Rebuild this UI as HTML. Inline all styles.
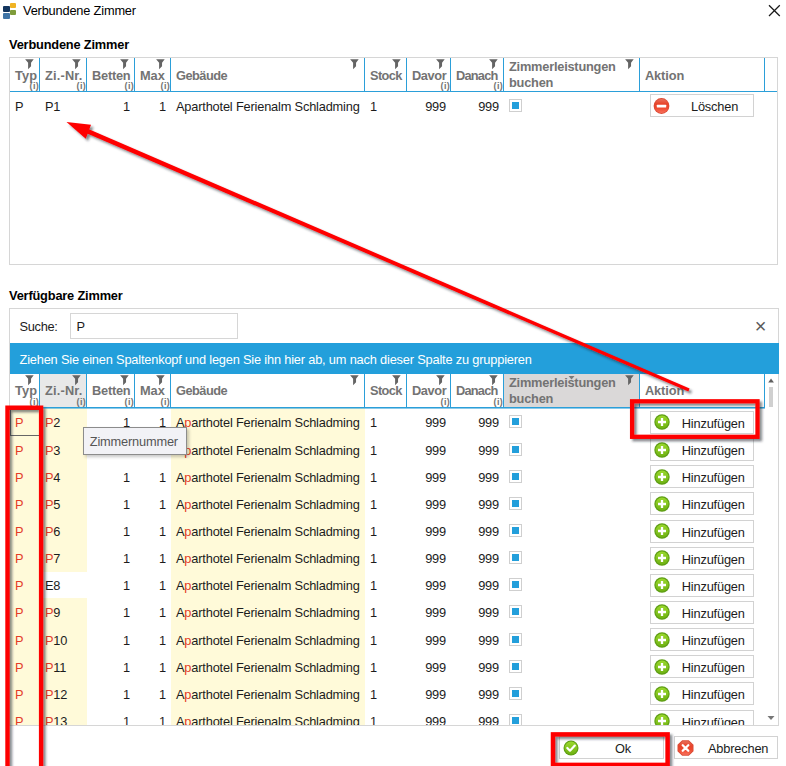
<!DOCTYPE html>
<html><head><meta charset="utf-8"><title>Verbundene Zimmer</title>
<style>
*{box-sizing:border-box;margin:0;padding:0}
html,body{width:786px;height:766px;overflow:hidden;background:#fff}
body{font-family:"Liberation Sans",sans-serif;font-size:12.8px;letter-spacing:-0.18px;color:#1c1c1c;position:relative}
.t{position:absolute;white-space:nowrap;line-height:14px}
.b{font-weight:bold;color:#000}
.panel{position:absolute;border:1px solid #d6d6d6;background:#fff}
.hdr{position:absolute;height:34px;border-bottom:1px solid #2b9fd9;background:#fff}
.hc{position:absolute;top:0;height:33px;border-right:1px solid #2b9fd9;color:#737373;font-weight:bold}
.hc .l{position:absolute;white-space:nowrap;line-height:15px}
.hc.hov{background:#e2e2e2}
.hc .fn{position:absolute;right:4px;top:1px}
.hc .inf{position:absolute;right:0px;bottom:0px;font-size:9px;line-height:9px;font-weight:bold;letter-spacing:0.3px}
.row{position:absolute;height:27px}
.c{position:absolute;top:0;height:28px;line-height:29px;white-space:nowrap}
.y{background:#fffad9}
.r{color:#e43a26}
.btn{position:absolute;border:1px solid #d2d2d2;background:#fff;height:23px}
.btn .ic{position:absolute;left:3px;top:2px}
.btn .bt{position:absolute;top:0;line-height:24px;white-space:nowrap}
.cb{position:absolute;width:13px;height:13px;border:1px solid #cfcfcf;background:#fff}
.cb i{position:absolute;left:2px;top:2px;width:7px;height:7px;background:#239fdb}
</style></head><body>
<svg width="0" height="0" style="position:absolute"><defs><linearGradient id="gr" x1="0" y1="0" x2="0" y2="1"><stop offset="0" stop-color="#e8705c"/><stop offset="0.35" stop-color="#e8442a"/><stop offset="0.65" stop-color="#ee4a30"/><stop offset="1" stop-color="#f8705c"/></linearGradient><linearGradient id="gg" x1="0" y1="0" x2="0" y2="1"><stop offset="0" stop-color="#9ad82c"/><stop offset="1" stop-color="#6fb212"/></linearGradient></defs></svg>
<div style="position:absolute;left:3px;top:6px;width:6.5px;height:5.5px;background:#14365f;border-radius:1px"></div>
<div style="position:absolute;left:3px;top:12.5px;width:6.5px;height:6px;background:#3f74a6;border-radius:1px"></div>
<div style="position:absolute;left:10.3px;top:2.7px;width:5.7px;height:5.7px;background:#f0b323;border-radius:1px"></div>
<div style="position:absolute;left:10.3px;top:9.8px;width:5.7px;height:4.8px;background:#7f9c3a;border-radius:1px"></div>
<div class="t" style="left:23px;top:4px;color:#000">Verbundene Zimmer</div>
<svg style="position:absolute;left:768px;top:4px" width="13" height="13" viewBox="0 0 13 13"><path d="M1 1.2 L11.8 12 M11.8 1.2 L1 12" stroke="#1a1a1a" stroke-width="1.25" fill="none"/></svg>
<div class="t b" style="left:9px;top:37.5px">Verbundene Zimmer</div>
<div class="panel" style="left:9px;top:57px;width:769px;height:208px"></div>
<div class="hdr" style="left:10px;top:58px;width:767px">
<div class="hc" style="left:0px;width:30px">
<div class="l" style="left:5px;top:9.5px;line-height:15px;letter-spacing:0.18px">Typ</div>
<svg class="fn" width="10" height="11" viewBox="0 0 10 11"><path d="M0.1 0.2 H8.7 L6.05 3.8 V7.2 L3.1 10.2 V3.8 Z" fill="#646464"/></svg>
<div class="inf">(i)</div>
</div>
<div class="hc" style="left:30px;width:47px">
<div class="l" style="left:5px;top:9.5px;line-height:15px;letter-spacing:0.18px">Zi.-Nr.</div>
<svg class="fn" width="10" height="11" viewBox="0 0 10 11"><path d="M0.1 0.2 H8.7 L6.05 3.8 V7.2 L3.1 10.2 V3.8 Z" fill="#646464"/></svg>
<div class="inf">(i)</div>
</div>
<div class="hc" style="left:77px;width:48px">
<div class="l" style="left:5px;top:9.5px;line-height:15px;letter-spacing:-0.23px">Betten</div>
<svg class="fn" width="10" height="11" viewBox="0 0 10 11"><path d="M0.1 0.2 H8.7 L6.05 3.8 V7.2 L3.1 10.2 V3.8 Z" fill="#646464"/></svg>
<div class="inf">(i)</div>
</div>
<div class="hc" style="left:125px;width:36px">
<div class="l" style="left:5px;top:9.5px;line-height:15px;letter-spacing:-0.05px">Max</div>
<svg class="fn" width="10" height="11" viewBox="0 0 10 11"><path d="M0.1 0.2 H8.7 L6.05 3.8 V7.2 L3.1 10.2 V3.8 Z" fill="#646464"/></svg>
<div class="inf">(i)</div>
</div>
<div class="hc" style="left:161px;width:194px">
<div class="l" style="left:5px;top:9.5px;line-height:15px;letter-spacing:-0.53px">Gebäude</div>
<svg class="fn" width="10" height="11" viewBox="0 0 10 11"><path d="M0.1 0.2 H8.7 L6.05 3.8 V7.2 L3.1 10.2 V3.8 Z" fill="#646464"/></svg>
</div>
<div class="hc" style="left:355px;width:42px">
<div class="l" style="left:5px;top:9.5px;line-height:15px;letter-spacing:-0.62px">Stock</div>
<svg class="fn" width="10" height="11" viewBox="0 0 10 11"><path d="M0.1 0.2 H8.7 L6.05 3.8 V7.2 L3.1 10.2 V3.8 Z" fill="#646464"/></svg>
</div>
<div class="hc" style="left:397px;width:44px">
<div class="l" style="left:5px;top:9.5px;line-height:15px;letter-spacing:-0.37px">Davor</div>
<svg class="fn" width="10" height="11" viewBox="0 0 10 11"><path d="M0.1 0.2 H8.7 L6.05 3.8 V7.2 L3.1 10.2 V3.8 Z" fill="#646464"/></svg>
<div class="inf">(i)</div>
</div>
<div class="hc" style="left:441px;width:53px">
<div class="l" style="left:5px;top:9.5px;line-height:15px;letter-spacing:-0.77px">Danach</div>
<svg class="fn" width="10" height="11" viewBox="0 0 10 11"><path d="M0.1 0.2 H8.7 L6.05 3.8 V7.2 L3.1 10.2 V3.8 Z" fill="#646464"/></svg>
<div class="inf">(i)</div>
</div>
<div class="hc" style="left:494px;width:136px">
<div class="l" style="left:5px;top:1px;line-height:16px;letter-spacing:-0.22px">Zimmerleistungen<br>buchen</div>
<svg class="fn" width="10" height="11" viewBox="0 0 10 11"><path d="M0.1 0.2 H8.7 L6.05 3.8 V7.2 L3.1 10.2 V3.8 Z" fill="#646464"/></svg>
</div>
<div class="hc" style="left:630px;width:125px">
<div class="l" style="left:5px;top:9.5px;line-height:15px;letter-spacing:-0.12px">Aktion</div>
</div>
</div>
<div class="row" style="top:92px;left:10px;width:767px">
<div class="c" style="left:0px;width:30px;padding-left:5px">P</div>
<div class="c" style="left:30px;width:47px;padding-left:5px">P1</div>
<div class="c" style="left:77px;width:48px;padding-right:5px;text-align:right">1</div>
<div class="c" style="left:125px;width:36px;padding-right:5px;text-align:right">1</div>
<div class="c" style="left:161px;width:194px;padding-left:5px">Aparthotel Ferienalm Schladming</div>
<div class="c" style="left:355px;width:42px;padding-left:5px">1</div>
<div class="c" style="left:397px;width:44px;padding-right:5px;text-align:right">999</div>
<div class="c" style="left:441px;width:53px;padding-right:5px;text-align:right">999</div>
<div class="cb" style="left:499px;top:7px"><i></i></div>
<div class="btn" style="left:640px;top:2px;width:104px;height:23px"><svg class="ic" style="left:2px;top:3px" width="17" height="16" viewBox="0 0 17 16"><circle cx="8.5" cy="8" r="7.9" fill="#dc4a34"/><circle cx="8.6" cy="8" r="7" fill="url(#gr)"/><rect x="3.8" y="6.8" width="9.4" height="2.8" rx="0.5" fill="#fff"/></svg><span class="bt" style="left:40px;line-height:24px">Löschen</span></div>
</div>
<div class="t b" style="left:9px;top:289px">Verfügbare Zimmer</div>
<div class="panel" style="left:9px;top:308px;width:770px;height:418px"></div>
<div class="t" style="left:19.5px;top:320px;letter-spacing:-0.3px">Suche:</div>
<div style="position:absolute;left:70px;top:313px;width:168px;height:26px;border:1px solid #d6d6d6;background:#fff"></div>
<div class="t" style="left:76.5px;top:320px">P</div>
<div class="t" style="left:754.7px;top:315.5px;font-size:20px;line-height:20px;color:#5a5a5a;letter-spacing:0">×</div>
<div style="position:absolute;left:10px;top:343px;width:769px;height:31px;background:#239fdb"></div>
<div class="t" style="left:19.5px;top:352.5px;color:#fff">Ziehen Sie einen Spaltenkopf und legen Sie ihn hier ab, um nach dieser Spalte zu gruppieren</div>
<div class="hdr" style="left:10px;top:374px;width:755px">
<div class="hc" style="left:0px;width:30px">
<div class="l" style="left:5px;top:9.0px;line-height:15px;letter-spacing:0.18px">Typ</div>
<svg class="fn" width="10" height="11" viewBox="0 0 10 11"><path d="M0.1 0.2 H8.7 L6.05 3.8 V7.2 L3.1 10.2 V3.8 Z" fill="#646464"/></svg>
<div class="inf">(i)</div>
</div>
<div class="hc" style="left:30px;width:47px;background:#e8e8e8">
<div class="l" style="left:5px;top:9.0px;line-height:15px;letter-spacing:0.18px">Zi.-Nr.</div>
<svg class="fn" width="10" height="11" viewBox="0 0 10 11"><path d="M0.1 0.2 H8.7 L6.05 3.8 V7.2 L3.1 10.2 V3.8 Z" fill="#646464"/></svg>
<div class="inf">(i)</div>
</div>
<div class="hc" style="left:77px;width:48px">
<div class="l" style="left:5px;top:9.0px;line-height:15px;letter-spacing:-0.23px">Betten</div>
<svg class="fn" width="10" height="11" viewBox="0 0 10 11"><path d="M0.1 0.2 H8.7 L6.05 3.8 V7.2 L3.1 10.2 V3.8 Z" fill="#646464"/></svg>
<div class="inf">(i)</div>
</div>
<div class="hc" style="left:125px;width:36px">
<div class="l" style="left:5px;top:9.0px;line-height:15px;letter-spacing:-0.05px">Max</div>
<svg class="fn" width="10" height="11" viewBox="0 0 10 11"><path d="M0.1 0.2 H8.7 L6.05 3.8 V7.2 L3.1 10.2 V3.8 Z" fill="#646464"/></svg>
<div class="inf">(i)</div>
</div>
<div class="hc" style="left:161px;width:194px">
<div class="l" style="left:5px;top:9.0px;line-height:15px;letter-spacing:-0.53px">Gebäude</div>
<svg class="fn" width="10" height="11" viewBox="0 0 10 11"><path d="M0.1 0.2 H8.7 L6.05 3.8 V7.2 L3.1 10.2 V3.8 Z" fill="#646464"/></svg>
</div>
<div class="hc" style="left:355px;width:42px">
<div class="l" style="left:5px;top:9.0px;line-height:15px;letter-spacing:-0.62px">Stock</div>
<svg class="fn" width="10" height="11" viewBox="0 0 10 11"><path d="M0.1 0.2 H8.7 L6.05 3.8 V7.2 L3.1 10.2 V3.8 Z" fill="#646464"/></svg>
</div>
<div class="hc" style="left:397px;width:44px">
<div class="l" style="left:5px;top:9.0px;line-height:15px;letter-spacing:-0.37px">Davor</div>
<svg class="fn" width="10" height="11" viewBox="0 0 10 11"><path d="M0.1 0.2 H8.7 L6.05 3.8 V7.2 L3.1 10.2 V3.8 Z" fill="#646464"/></svg>
<div class="inf">(i)</div>
</div>
<div class="hc" style="left:441px;width:53px">
<div class="l" style="left:5px;top:9.0px;line-height:15px;letter-spacing:-0.77px">Danach</div>
<svg class="fn" width="10" height="11" viewBox="0 0 10 11"><path d="M0.1 0.2 H8.7 L6.05 3.8 V7.2 L3.1 10.2 V3.8 Z" fill="#646464"/></svg>
<div class="inf">(i)</div>
</div>
<div class="hc" style="left:494px;width:136px;background:#dad8d8">
<div class="l" style="left:5px;top:0.5px;line-height:16px;letter-spacing:-0.22px">Zimmerleistungen<br>buchen</div>
<svg class="fn" width="10" height="11" viewBox="0 0 10 11"><path d="M0.1 0.2 H8.7 L6.05 3.8 V7.2 L3.1 10.2 V3.8 Z" fill="#646464"/></svg>
</div>
<div class="hc" style="left:630px;width:125px">
<div class="l" style="left:5px;top:9.0px;line-height:15px;letter-spacing:-0.12px">Aktion</div>
</div>
</div>
<div style="position:absolute;left:0;top:408px;width:786px;height:317px;overflow:hidden">
<div class="row" style="top:0.4px;left:10px;width:767px">
<div class="c y" style="left:0px;width:30px;padding-left:5px"><span class="r">P</span></div>
<div class="c y" style="left:30px;width:47px;padding-left:5px"><span class="r">P</span>2</div>
<div class="c" style="left:77px;width:48px;padding-right:5px;text-align:right">1</div>
<div class="c" style="left:125px;width:36px;padding-right:5px;text-align:right">1</div>
<div class="c y" style="left:161px;width:194px;padding-left:5px">A<span class="r">p</span>arthotel Ferienalm Schladming</div>
<div class="c" style="left:355px;width:42px;padding-left:5px">1</div>
<div class="c" style="left:397px;width:44px;padding-right:5px;text-align:right">999</div>
<div class="c" style="left:441px;width:53px;padding-right:5px;text-align:right">999</div>
<div class="cb" style="left:499px;top:7px"><i></i></div>
<div class="btn" style="left:640px;top:2.6px;width:104px;height:23px"><svg class="ic" style="left:3px;top:2.4px" width="16" height="16" viewBox="0 0 16 16"><circle cx="8" cy="8" r="7.7" fill="#5e9e14"/><circle cx="8" cy="8" r="6.5" fill="url(#gg)"/><path d="M8 4 V12 M4 8 H12" stroke="#fff" stroke-width="2.3" fill="none"/></svg><span class="bt" style="left:30.8px;line-height:23.4px">Hinzufügen</span></div>
</div>
<div class="row" style="top:27.54px;left:10px;width:767px">
<div class="c y" style="left:0px;width:30px;padding-left:5px"><span class="r">P</span></div>
<div class="c y" style="left:30px;width:47px;padding-left:5px"><span class="r">P</span>3</div>
<div class="c" style="left:77px;width:48px;padding-right:5px;text-align:right">1</div>
<div class="c" style="left:125px;width:36px;padding-right:5px;text-align:right">1</div>
<div class="c y" style="left:161px;width:194px;padding-left:5px">A<span class="r">p</span>arthotel Ferienalm Schladming</div>
<div class="c" style="left:355px;width:42px;padding-left:5px">1</div>
<div class="c" style="left:397px;width:44px;padding-right:5px;text-align:right">999</div>
<div class="c" style="left:441px;width:53px;padding-right:5px;text-align:right">999</div>
<div class="cb" style="left:499px;top:7px"><i></i></div>
<div class="btn" style="left:640px;top:2.6px;width:104px;height:23px"><svg class="ic" style="left:3px;top:2.4px" width="16" height="16" viewBox="0 0 16 16"><circle cx="8" cy="8" r="7.7" fill="#5e9e14"/><circle cx="8" cy="8" r="6.5" fill="url(#gg)"/><path d="M8 4 V12 M4 8 H12" stroke="#fff" stroke-width="2.3" fill="none"/></svg><span class="bt" style="left:30.8px;line-height:23.4px">Hinzufügen</span></div>
</div>
<div class="row" style="top:54.68px;left:10px;width:767px">
<div class="c y" style="left:0px;width:30px;padding-left:5px"><span class="r">P</span></div>
<div class="c y" style="left:30px;width:47px;padding-left:5px"><span class="r">P</span>4</div>
<div class="c" style="left:77px;width:48px;padding-right:5px;text-align:right">1</div>
<div class="c" style="left:125px;width:36px;padding-right:5px;text-align:right">1</div>
<div class="c y" style="left:161px;width:194px;padding-left:5px">A<span class="r">p</span>arthotel Ferienalm Schladming</div>
<div class="c" style="left:355px;width:42px;padding-left:5px">1</div>
<div class="c" style="left:397px;width:44px;padding-right:5px;text-align:right">999</div>
<div class="c" style="left:441px;width:53px;padding-right:5px;text-align:right">999</div>
<div class="cb" style="left:499px;top:7px"><i></i></div>
<div class="btn" style="left:640px;top:2.6px;width:104px;height:23px"><svg class="ic" style="left:3px;top:2.4px" width="16" height="16" viewBox="0 0 16 16"><circle cx="8" cy="8" r="7.7" fill="#5e9e14"/><circle cx="8" cy="8" r="6.5" fill="url(#gg)"/><path d="M8 4 V12 M4 8 H12" stroke="#fff" stroke-width="2.3" fill="none"/></svg><span class="bt" style="left:30.8px;line-height:23.4px">Hinzufügen</span></div>
</div>
<div class="row" style="top:81.82px;left:10px;width:767px">
<div class="c y" style="left:0px;width:30px;padding-left:5px"><span class="r">P</span></div>
<div class="c y" style="left:30px;width:47px;padding-left:5px"><span class="r">P</span>5</div>
<div class="c" style="left:77px;width:48px;padding-right:5px;text-align:right">1</div>
<div class="c" style="left:125px;width:36px;padding-right:5px;text-align:right">1</div>
<div class="c y" style="left:161px;width:194px;padding-left:5px">A<span class="r">p</span>arthotel Ferienalm Schladming</div>
<div class="c" style="left:355px;width:42px;padding-left:5px">1</div>
<div class="c" style="left:397px;width:44px;padding-right:5px;text-align:right">999</div>
<div class="c" style="left:441px;width:53px;padding-right:5px;text-align:right">999</div>
<div class="cb" style="left:499px;top:7px"><i></i></div>
<div class="btn" style="left:640px;top:2.6px;width:104px;height:23px"><svg class="ic" style="left:3px;top:2.4px" width="16" height="16" viewBox="0 0 16 16"><circle cx="8" cy="8" r="7.7" fill="#5e9e14"/><circle cx="8" cy="8" r="6.5" fill="url(#gg)"/><path d="M8 4 V12 M4 8 H12" stroke="#fff" stroke-width="2.3" fill="none"/></svg><span class="bt" style="left:30.8px;line-height:23.4px">Hinzufügen</span></div>
</div>
<div class="row" style="top:108.96px;left:10px;width:767px">
<div class="c y" style="left:0px;width:30px;padding-left:5px"><span class="r">P</span></div>
<div class="c y" style="left:30px;width:47px;padding-left:5px"><span class="r">P</span>6</div>
<div class="c" style="left:77px;width:48px;padding-right:5px;text-align:right">1</div>
<div class="c" style="left:125px;width:36px;padding-right:5px;text-align:right">1</div>
<div class="c y" style="left:161px;width:194px;padding-left:5px">A<span class="r">p</span>arthotel Ferienalm Schladming</div>
<div class="c" style="left:355px;width:42px;padding-left:5px">1</div>
<div class="c" style="left:397px;width:44px;padding-right:5px;text-align:right">999</div>
<div class="c" style="left:441px;width:53px;padding-right:5px;text-align:right">999</div>
<div class="cb" style="left:499px;top:7px"><i></i></div>
<div class="btn" style="left:640px;top:2.6px;width:104px;height:23px"><svg class="ic" style="left:3px;top:2.4px" width="16" height="16" viewBox="0 0 16 16"><circle cx="8" cy="8" r="7.7" fill="#5e9e14"/><circle cx="8" cy="8" r="6.5" fill="url(#gg)"/><path d="M8 4 V12 M4 8 H12" stroke="#fff" stroke-width="2.3" fill="none"/></svg><span class="bt" style="left:30.8px;line-height:23.4px">Hinzufügen</span></div>
</div>
<div class="row" style="top:136.1px;left:10px;width:767px">
<div class="c y" style="left:0px;width:30px;padding-left:5px"><span class="r">P</span></div>
<div class="c y" style="left:30px;width:47px;padding-left:5px"><span class="r">P</span>7</div>
<div class="c" style="left:77px;width:48px;padding-right:5px;text-align:right">1</div>
<div class="c" style="left:125px;width:36px;padding-right:5px;text-align:right">1</div>
<div class="c y" style="left:161px;width:194px;padding-left:5px">A<span class="r">p</span>arthotel Ferienalm Schladming</div>
<div class="c" style="left:355px;width:42px;padding-left:5px">1</div>
<div class="c" style="left:397px;width:44px;padding-right:5px;text-align:right">999</div>
<div class="c" style="left:441px;width:53px;padding-right:5px;text-align:right">999</div>
<div class="cb" style="left:499px;top:7px"><i></i></div>
<div class="btn" style="left:640px;top:2.6px;width:104px;height:23px"><svg class="ic" style="left:3px;top:2.4px" width="16" height="16" viewBox="0 0 16 16"><circle cx="8" cy="8" r="7.7" fill="#5e9e14"/><circle cx="8" cy="8" r="6.5" fill="url(#gg)"/><path d="M8 4 V12 M4 8 H12" stroke="#fff" stroke-width="2.3" fill="none"/></svg><span class="bt" style="left:30.8px;line-height:23.4px">Hinzufügen</span></div>
</div>
<div class="row" style="top:163.24px;left:10px;width:767px">
<div class="c y" style="left:0px;width:30px;padding-left:5px"><span class="r">P</span></div>
<div class="c" style="left:30px;width:47px;padding-left:5px">E8</div>
<div class="c" style="left:77px;width:48px;padding-right:5px;text-align:right">1</div>
<div class="c" style="left:125px;width:36px;padding-right:5px;text-align:right">1</div>
<div class="c y" style="left:161px;width:194px;padding-left:5px">A<span class="r">p</span>arthotel Ferienalm Schladming</div>
<div class="c" style="left:355px;width:42px;padding-left:5px">1</div>
<div class="c" style="left:397px;width:44px;padding-right:5px;text-align:right">999</div>
<div class="c" style="left:441px;width:53px;padding-right:5px;text-align:right">999</div>
<div class="cb" style="left:499px;top:7px"><i></i></div>
<div class="btn" style="left:640px;top:2.6px;width:104px;height:23px"><svg class="ic" style="left:3px;top:2.4px" width="16" height="16" viewBox="0 0 16 16"><circle cx="8" cy="8" r="7.7" fill="#5e9e14"/><circle cx="8" cy="8" r="6.5" fill="url(#gg)"/><path d="M8 4 V12 M4 8 H12" stroke="#fff" stroke-width="2.3" fill="none"/></svg><span class="bt" style="left:30.8px;line-height:23.4px">Hinzufügen</span></div>
</div>
<div class="row" style="top:190.38px;left:10px;width:767px">
<div class="c y" style="left:0px;width:30px;padding-left:5px"><span class="r">P</span></div>
<div class="c y" style="left:30px;width:47px;padding-left:5px"><span class="r">P</span>9</div>
<div class="c" style="left:77px;width:48px;padding-right:5px;text-align:right">1</div>
<div class="c" style="left:125px;width:36px;padding-right:5px;text-align:right">1</div>
<div class="c y" style="left:161px;width:194px;padding-left:5px">A<span class="r">p</span>arthotel Ferienalm Schladming</div>
<div class="c" style="left:355px;width:42px;padding-left:5px">1</div>
<div class="c" style="left:397px;width:44px;padding-right:5px;text-align:right">999</div>
<div class="c" style="left:441px;width:53px;padding-right:5px;text-align:right">999</div>
<div class="cb" style="left:499px;top:7px"><i></i></div>
<div class="btn" style="left:640px;top:2.6px;width:104px;height:23px"><svg class="ic" style="left:3px;top:2.4px" width="16" height="16" viewBox="0 0 16 16"><circle cx="8" cy="8" r="7.7" fill="#5e9e14"/><circle cx="8" cy="8" r="6.5" fill="url(#gg)"/><path d="M8 4 V12 M4 8 H12" stroke="#fff" stroke-width="2.3" fill="none"/></svg><span class="bt" style="left:30.8px;line-height:23.4px">Hinzufügen</span></div>
</div>
<div class="row" style="top:217.52px;left:10px;width:767px">
<div class="c y" style="left:0px;width:30px;padding-left:5px"><span class="r">P</span></div>
<div class="c y" style="left:30px;width:47px;padding-left:5px"><span class="r">P</span>10</div>
<div class="c" style="left:77px;width:48px;padding-right:5px;text-align:right">1</div>
<div class="c" style="left:125px;width:36px;padding-right:5px;text-align:right">1</div>
<div class="c y" style="left:161px;width:194px;padding-left:5px">A<span class="r">p</span>arthotel Ferienalm Schladming</div>
<div class="c" style="left:355px;width:42px;padding-left:5px">1</div>
<div class="c" style="left:397px;width:44px;padding-right:5px;text-align:right">999</div>
<div class="c" style="left:441px;width:53px;padding-right:5px;text-align:right">999</div>
<div class="cb" style="left:499px;top:7px"><i></i></div>
<div class="btn" style="left:640px;top:2.6px;width:104px;height:23px"><svg class="ic" style="left:3px;top:2.4px" width="16" height="16" viewBox="0 0 16 16"><circle cx="8" cy="8" r="7.7" fill="#5e9e14"/><circle cx="8" cy="8" r="6.5" fill="url(#gg)"/><path d="M8 4 V12 M4 8 H12" stroke="#fff" stroke-width="2.3" fill="none"/></svg><span class="bt" style="left:30.8px;line-height:23.4px">Hinzufügen</span></div>
</div>
<div class="row" style="top:244.66px;left:10px;width:767px">
<div class="c y" style="left:0px;width:30px;padding-left:5px"><span class="r">P</span></div>
<div class="c y" style="left:30px;width:47px;padding-left:5px"><span class="r">P</span>11</div>
<div class="c" style="left:77px;width:48px;padding-right:5px;text-align:right">1</div>
<div class="c" style="left:125px;width:36px;padding-right:5px;text-align:right">1</div>
<div class="c y" style="left:161px;width:194px;padding-left:5px">A<span class="r">p</span>arthotel Ferienalm Schladming</div>
<div class="c" style="left:355px;width:42px;padding-left:5px">1</div>
<div class="c" style="left:397px;width:44px;padding-right:5px;text-align:right">999</div>
<div class="c" style="left:441px;width:53px;padding-right:5px;text-align:right">999</div>
<div class="cb" style="left:499px;top:7px"><i></i></div>
<div class="btn" style="left:640px;top:2.6px;width:104px;height:23px"><svg class="ic" style="left:3px;top:2.4px" width="16" height="16" viewBox="0 0 16 16"><circle cx="8" cy="8" r="7.7" fill="#5e9e14"/><circle cx="8" cy="8" r="6.5" fill="url(#gg)"/><path d="M8 4 V12 M4 8 H12" stroke="#fff" stroke-width="2.3" fill="none"/></svg><span class="bt" style="left:30.8px;line-height:23.4px">Hinzufügen</span></div>
</div>
<div class="row" style="top:271.8px;left:10px;width:767px">
<div class="c y" style="left:0px;width:30px;padding-left:5px"><span class="r">P</span></div>
<div class="c y" style="left:30px;width:47px;padding-left:5px"><span class="r">P</span>12</div>
<div class="c" style="left:77px;width:48px;padding-right:5px;text-align:right">1</div>
<div class="c" style="left:125px;width:36px;padding-right:5px;text-align:right">1</div>
<div class="c y" style="left:161px;width:194px;padding-left:5px">A<span class="r">p</span>arthotel Ferienalm Schladming</div>
<div class="c" style="left:355px;width:42px;padding-left:5px">1</div>
<div class="c" style="left:397px;width:44px;padding-right:5px;text-align:right">999</div>
<div class="c" style="left:441px;width:53px;padding-right:5px;text-align:right">999</div>
<div class="cb" style="left:499px;top:7px"><i></i></div>
<div class="btn" style="left:640px;top:2.6px;width:104px;height:23px"><svg class="ic" style="left:3px;top:2.4px" width="16" height="16" viewBox="0 0 16 16"><circle cx="8" cy="8" r="7.7" fill="#5e9e14"/><circle cx="8" cy="8" r="6.5" fill="url(#gg)"/><path d="M8 4 V12 M4 8 H12" stroke="#fff" stroke-width="2.3" fill="none"/></svg><span class="bt" style="left:30.8px;line-height:23.4px">Hinzufügen</span></div>
</div>
<div class="row" style="top:298.94px;left:10px;width:767px">
<div class="c y" style="left:0px;width:30px;padding-left:5px"><span class="r">P</span></div>
<div class="c y" style="left:30px;width:47px;padding-left:5px"><span class="r">P</span>13</div>
<div class="c" style="left:77px;width:48px;padding-right:5px;text-align:right">1</div>
<div class="c" style="left:125px;width:36px;padding-right:5px;text-align:right">1</div>
<div class="c y" style="left:161px;width:194px;padding-left:5px">A<span class="r">p</span>arthotel Ferienalm Schladming</div>
<div class="c" style="left:355px;width:42px;padding-left:5px">1</div>
<div class="c" style="left:397px;width:44px;padding-right:5px;text-align:right">999</div>
<div class="c" style="left:441px;width:53px;padding-right:5px;text-align:right">999</div>
<div class="cb" style="left:499px;top:7px"><i></i></div>
<div class="btn" style="left:640px;top:2.6px;width:104px;height:23px"><svg class="ic" style="left:3px;top:2.4px" width="16" height="16" viewBox="0 0 16 16"><circle cx="8" cy="8" r="7.7" fill="#5e9e14"/><circle cx="8" cy="8" r="6.5" fill="url(#gg)"/><path d="M8 4 V12 M4 8 H12" stroke="#fff" stroke-width="2.3" fill="none"/></svg><span class="bt" style="left:30.8px;line-height:23.4px">Hinzufügen</span></div>
</div>
</div>
<div style="position:absolute;left:10px;top:408px;width:755px;height:1px;background:rgba(43,159,217,0.55)"></div>
<div style="position:absolute;left:10px;top:409px;width:30px;height:27px;border:1px solid #666"></div>
<svg style="position:absolute;left:568px;top:375px" width="8" height="6" viewBox="0 0 8 6"><path d="M0.6 1.1 H6.5 L3.55 4.4 Z" fill="#7a7a7a"/></svg>
<svg style="position:absolute;left:766px;top:377px" width="10" height="8" viewBox="0 0 10 8"><path d="M2.2 5.6 L5.05 1.6 L7.9 5.6 Z" fill="#606060"/></svg>
<div style="position:absolute;left:769px;top:387px;width:4px;height:20px;background:#d0d0d0"></div>
<svg style="position:absolute;left:766px;top:714px" width="10" height="8" viewBox="0 0 10 8"><path d="M1.5 2 L5 6 L8.5 2 Z" fill="#777"/></svg>
<div style="position:absolute;left:83px;top:427px;width:104px;height:28px;border:1px solid #8c8c8c;background:#f2f2f6;box-shadow:2px 2px 3px rgba(0,0,0,.22)"></div><div class="t" style="left:89.8px;top:434.5px;color:#555">Zimmernummer</div>
<div class="btn" style="left:559px;top:736px;width:105px;height:23px"><svg class="ic" style="left:3px;top:2.8px" width="16" height="16" viewBox="0 0 16 16"><circle cx="8" cy="8" r="7.5" fill="#5e9e14"/><circle cx="8" cy="8" r="6.4" fill="url(#gg)"/><path d="M4.3 8 L7 10.7 L11.8 5.6" stroke="#fff" stroke-width="2.2" fill="none" stroke-linecap="round" stroke-linejoin="round"/></svg><span class="bt" style="left:55px;line-height:24px">Ok</span></div>
<div class="btn" style="left:674px;top:736px;width:104px;height:23px"><svg class="ic" style="left:1.8px;top:2.8px" width="17" height="16" viewBox="0 0 17 16"><path d="M5.2 0.2 H11.8 L16.5 4.8 V11.2 L11.8 15.8 H5.2 L0.5 11.2 V4.8 Z" fill="#dc4a34"/><path d="M5.6 1.2 H11.4 L15.5 5.2 V10.8 L11.4 14.8 H5.6 L1.5 10.8 V5.2 Z" fill="url(#gr)"/><path d="M5.7 5.2 L11.3 10.8 M11.3 5.2 L5.7 10.8" stroke="#fff" stroke-width="2.3" fill="none" stroke-linecap="round"/></svg><span class="bt" style="left:33px;line-height:24px">Abbrechen</span></div>
<svg style="position:absolute;left:0;top:0" width="786" height="766" viewBox="0 0 786 766">
<defs><filter id="sh" x="-5%" y="-5%" width="110%" height="110%"><feDropShadow dx="2.4" dy="2.4" stdDeviation="1.25" flood-color="#1a2a30" flood-opacity="0.55"/></filter></defs>
<g filter="url(#sh)">
<rect x="7.5" y="407.7" width="33.6" height="380" fill="none" stroke="#fe0000" stroke-width="4.4"/>
<rect x="632.1" y="401.3" width="125.4" height="35.5" fill="none" stroke="#fe0000" stroke-width="4.3"/>
<rect x="553" y="734.4" width="114.6" height="30.5" fill="none" stroke="#fe0000" stroke-width="4.5"/>
<path d="M87.09 133.41 L688.39 391.42 L689.61 388.58 L88.91 129.19 Z" fill="#fe0000"/>
<path d="M66.5 122 L91 124.8 L85.8 138.7 Z" fill="#fe0000"/>
</g></svg>
</body></html>
